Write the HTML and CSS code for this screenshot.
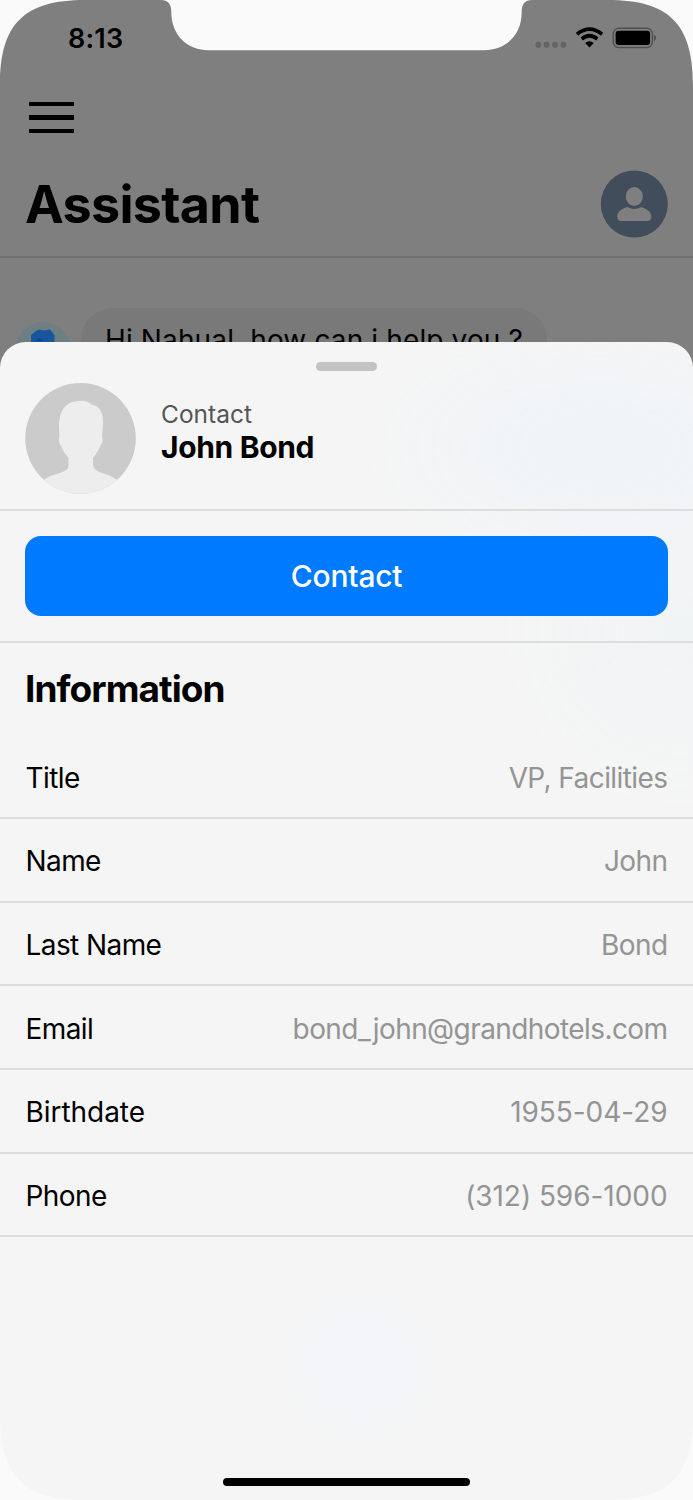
FILE: index.html
```html
<!DOCTYPE html>
<html lang="en">
<head>
    <meta charset="utf-8">
    <title>Assistant</title>
    <link rel="stylesheet" href="styles.css">
</head>
<body>
<div class="phone">

    <div class="backdrop">
        <div class="status">
            <span class="clock">8:13</span>
            <svg class="status-icons" width="124" height="24" viewBox="0 0 124 24">
                <g fill="#646464">
                    <rect x="3.5" y="15.8" width="5.6" height="6" rx="2"/>
                    <rect x="11.8" y="15.8" width="5.6" height="6" rx="2"/>
                    <rect x="20.2" y="15.8" width="5.6" height="6" rx="2"/>
                    <rect x="28.6" y="15.8" width="5.6" height="6" rx="2"/>
                </g>
                <g fill="none" stroke="#000" stroke-width="3.7">
                    <path d="M45 8.2Q57.5 -1.9 70 8.2"/>
                    <path d="M49.7 13Q57.5 6.5 65.3 13"/>
                </g>
                <path d="M53.2 17Q57.5 13.5 61.8 17L57.5 21.6Z"/>
                <rect x="81.2" y="2.3" width="39.2" height="19.2" rx="5.5" fill="none" stroke="#505050" stroke-width="1.4"/>
                <rect x="83.6" y="4.8" width="34.5" height="14.2" rx="3"/>
                <path d="M122 8.5Q124 9.5 124 11.8T122 15.2Z" fill="#505050"/>
            </svg>
        </div>
        <div class="menu"><i></i><i></i><i></i></div>
        <div class="title-bar">
            <h1>Assistant</h1>
            <svg width="68" height="68" viewBox="0 0 68 68">
                <circle cx="34.3" cy="34" r="33.5" fill="#414d5a"/>
                <ellipse cx="34.3" cy="26.5" rx="8.5" ry="9.5" fill="#7f7f7f"/>
                <path d="M27.3 37Q34.3 41 41.3 37C47 39 51.3 42 51.3 46.5Q51.3 51 47.3 51H21.3Q17.3 51 17.3 46.5C17.3 42 21 39 27.3 37Z" fill="#7f7f7f"/>
            </svg>
        </div>
        <div class="chat">
            <svg class="bot" width="58" height="58" viewBox="0 0 58 58">
                <circle cx="29" cy="29" r="28" fill="#6e7f84"/>
                <path d="M17 29V14L22 10L25 8.5L30 9.5L36 8.5L40.5 14V29Z" fill="#17569b"/>
                <path d="M21 20L25 17.5L30 20Z" fill="#15389b"/>
            </svg>
            <div class="bubble">Hi Nahual, how can i help you ?</div>
        </div>
    </div>

    <div class="sheet">
        <div class="handle"></div>
        <div class="person">
            <svg width="112" height="112" viewBox="0 0 112 112">
                <defs><clipPath id="round"><circle cx="55.5" cy="56.3" r="55.3"/></clipPath></defs>
                <g clip-path="url(#round)">
                    <rect width="112" height="112" fill="#cbcbcb"/>
                    <path d="M43.5 76C40 72 37 67 36 64C33.5 61 33.5 56 34.5 54C33 38 34 19 56 18.8C61 18.8 64 20 66.5 22.5C76 23.5 78.5 33 78 43L77 54C78.5 58 77 62 75.5 63.5C74 68 71 72 68 76V83C69 92 83 90 92 98V114H19V98C28 90 44 92 43.5 83Z" fill="#ededed"/>
                </g>
            </svg>
            <div class="person-text">
                <div class="kind">Contact</div>
                <div class="full-name">John Bond</div>
            </div>
        </div>
        <div class="action"><button>Contact</button></div>
        <h2>Information</h2>
        <dl class="info">
            <div><dt>Title</dt><dd>VP, Facilities</dd></div>
            <div><dt>Name</dt><dd>John</dd></div>
            <div><dt>Last Name</dt><dd>Bond</dd></div>
            <div><dt>Email</dt><dd>bond_john@grandhotels.com</dd></div>
            <div><dt class="wide">Birthdate</dt><dd class="wide">1955-04-29</dd></div>
            <div><dt>Phone</dt><dd class="wide">(312) 596-1000</dd></div>
        </dl>
        <div class="home-bar"></div>
    </div>

    <!-- notch and rounded corners of the device -->
    <svg class="bezel" width="693" height="1500" viewBox="0 0 693 1500" fill="#fafafa">
        <path d="M161 0C168 0 171.3 4 171.3 12C171.3 35 187 50.3 209 50.3H484C506 50.3 521.7 35 521.7 12C521.7 4 525 0 532 0Z"/>
        <path d="M0 0H85C24 0 0 24 0 85Z"/>
        <path d="M693 0V85C693 24 669 0 608 0Z"/>
        <path d="M0 1500V1415C0 1476 24 1500 85 1500Z"/>
        <path d="M693 1500H608C669 1500 693 1476 693 1415Z"/>
    </svg>
</div>
</body>
</html>
```
FILE: styles.css
```css
* {
    box-sizing: border-box;
}
body {
    margin: 0;
    font-family: Inter, "Liberation Sans", sans-serif;
    color: #000;
}
h1, h2, dl, dd {
    margin: 0;
}
svg {
    display: block;
    flex: none;
}
.phone {
    position: relative;
    display: flex;
    flex-direction: column;
    height: 1500px;
    overflow: hidden;
    background: #7f7f7f;
}

/* dimmed page, the sheet slides over its lower part */
.backdrop {
    height: 341.7px;
}
.status {
    display: flex;
    justify-content: space-between;
    align-items: center;
    height: 76px;
    padding: 0 37px 0 68px;
}
.clock {
    font-size: 27px;
    font-weight: 600;
    letter-spacing: 0.2px;
}
.menu {
    display: flex;
    flex-direction: column;
    gap: 9px;
    width: 45px;
    margin: 25.5px 0 0 29.4px;
}
.menu i {
    height: 4.5px;
    background: #000;
}
.title-bar {
    display: flex;
    justify-content: space-between;
    align-items: center;
    height: 125px;
    padding: 19px 25px 0;
    border-bottom: 2px solid #707070;
}
h1 {
    padding-top: 1px;
    font-size: 52px;
    line-height: 68px;
    font-weight: 700;
    letter-spacing: -0.7px;
}
.chat {
    display: flex;
    gap: 9px;
    padding: 50px 0 0 14px;
}
.bot {
    margin-top: 13px;
}
.bubble {
    width: 466px;
    height: 66px;
    padding: 15px 0 0 24px;
    border-radius: 32px;
    background: #797979;
    font-size: 28px;
    line-height: 34px;
    letter-spacing: 0.13px;
    white-space: nowrap;
}

/* contact sheet */
.sheet {
    position: relative;
    flex: 1;
    display: flex;
    flex-direction: column;
    border-radius: 26px 26px 0 0;
    background:
        radial-gradient(ellipse 240px 130px at 600px 105px, #f0f4f7 30%, transparent),
        radial-gradient(ellipse 180px 180px at 680px 290px, #f1f4f5 10%, transparent),
        radial-gradient(circle 85px at 360px 1025px, #f3f5f8 50%, transparent),
        #f5f5f5;
}
.handle {
    width: 61px;
    height: 9px;
    margin: 20.3px auto 0;
    border-radius: 5px;
    background: #c3c3c3;
}
.person {
    display: flex;
    align-items: center;
    gap: 24px;
    height: 140px;
    padding: 0 25px 4px;
    border-bottom: 2px solid #dcdddd;
}
.person-text {
    padding-bottom: 12px;
}
.kind {
    font-size: 24.5px;
    line-height: 32px;
    color: #555;
}
.full-name {
    font-size: 30px;
    line-height: 35px;
    font-weight: 700;
    letter-spacing: -0.35px;
}
.action {
    height: 132px;
    padding: 25px;
    border-bottom: 2px solid #dcdddd;
}
button {
    display: block;
    width: 100%;
    height: 80px;
    border: 0;
    border-radius: 16px;
    background: #007aff;
    color: #fff;
    font: 500 30px Inter, "Liberation Sans", sans-serif;
    letter-spacing: -0.2px;
}
h2 {
    padding: 23.4px 25px 0;
    height: 92.2px;
    font-size: 37px;
    line-height: 46px;
    font-weight: 700;
    letter-spacing: -0.93px;
}
.info div {
    display: flex;
    justify-content: space-between;
    align-items: center;
    height: 83.7px;
    padding: 3px 25.5px 0;
    border-bottom: 2px solid #dcdddd;
    font-size: 28px;
    letter-spacing: -0.58px;
}
.info dd {
    color: #949494;
}
.info .wide {
    letter-spacing: -0.05px;
}
.home-bar {
    width: 247px;
    height: 8px;
    margin: auto auto 14px;
    border-radius: 4px;
    background: #000;
}
.bezel {
    position: absolute;
    top: 0;
    left: 0;
}
```
